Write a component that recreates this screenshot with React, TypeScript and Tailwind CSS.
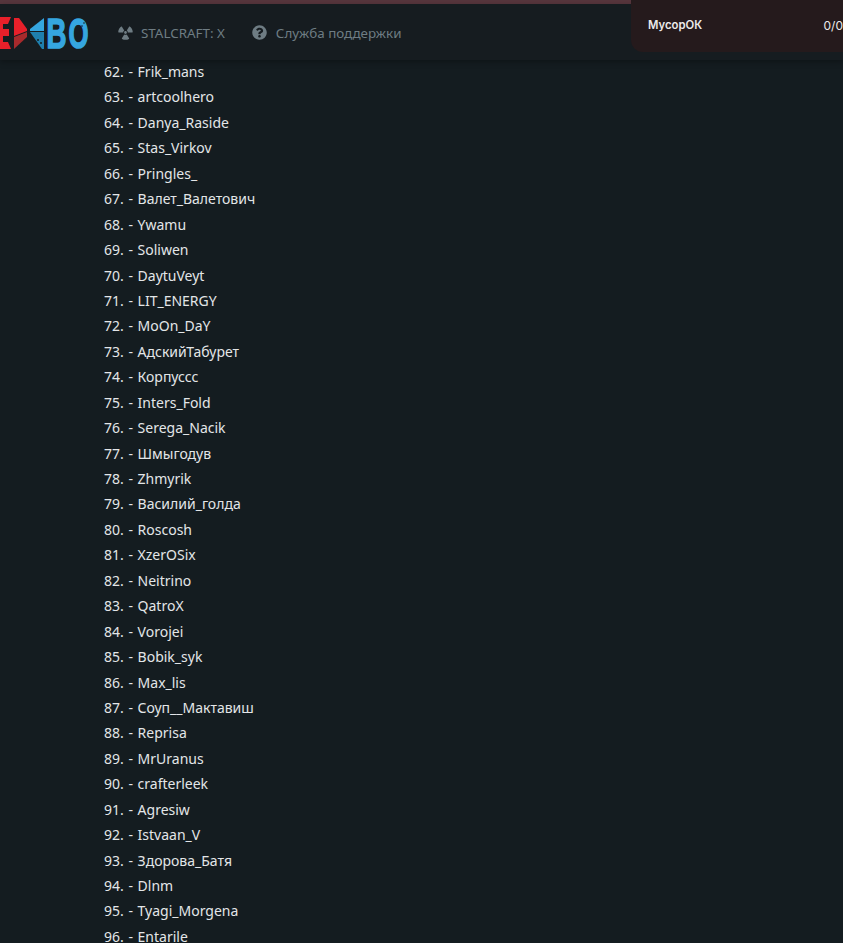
import React from "react";
import { FaRadiation, FaQuestionCircle } from "react-icons/fa";

const players = [
  "Frik_mans", "artcoolhero", "Danya_Raside", "Stas_Virkov", "Pringles_", "Валет_Валетович", "Ywamu",
  "Soliwen", "DaytuVeyt", "LIT_ENERGY", "MoOn_DaY", "АдскийТабурет", "Корпуссс", "Inters_Fold",
  "Serega_Nacik", "Шмыгодув", "Zhmyrik", "Василий_голда", "Roscosh", "XzerOSix", "Neitrino", "QatroX",
  "Vorojei", "Bobik_syk", "Max_lis", "Соуп__Мактавиш", "Reprisa", "MrUranus", "crafterleek", "Agresiw",
  "Istvaan_V", "Здорова_Батя", "Dlnm", "Tyagi_Morgena", "Entarile",
];

const Logo = () => (
  <svg width="90" height="32" viewBox="0 0 90 32" className="shrink-0">
    <path d="M-10 0H11L8 7H3V12H9V19H3V25H8L11 32H-10Z" fill="#e8202a" />
    <path d="M14 1H19L27 12V14L14 19Z" fill="#e8202a" />
    <path d="M14 20L27 15V20L14 32Z" fill="#a82a2c" />
    <path d="M44 1V14H30V12Z" fill="#35a6e0" />
    <path d="M30 15H44V32H42Z" fill="#1f7fae" />
    <circle cx="38" cy="23" r="1" fill="#161c20" />
    <circle cx="41" cy="26" r="1" fill="#161c20" />
    <text x="46.5" y="31" fontFamily="'Liberation Sans', sans-serif" fontWeight="700" fontSize="43" textLength="20" lengthAdjust="spacingAndGlyphs" fill="#35a6e0" stroke="#35a6e0" strokeWidth="1.6">B</text>
    <text x="68.5" y="31" fontFamily="'Liberation Sans', sans-serif" fontWeight="700" fontSize="43" textLength="20" lengthAdjust="spacingAndGlyphs" fill="#35a6e0" stroke="#35a6e0" strokeWidth="1.6">O</text>
    <circle cx="84" cy="6" r="0.8" fill="#161c20" />
    <circle cx="82" cy="9" r="0.8" fill="#161c20" />
  </svg>
);

export default function App() {
  return (
    <div className="relative h-[943px] overflow-hidden bg-[#141c20] font-['Noto_Sans',sans-serif]">
      <div className="h-1 bg-[#57363d]" />
      <header className="flex h-[56px] items-center bg-[#161c20] pt-[2px] shadow-[0_2px_6px_rgba(0,0,0,0.3)] text-[#6e7c83] text-[13.4px]">
        <Logo />
        <div className="ml-[28px] flex items-center gap-2">
          <FaRadiation className="h-[15px] w-[15px]" />
          <span>STALCRAFT: X</span>
        </div>
        <div className="ml-[27px] flex items-center gap-[9px]">
          <FaQuestionCircle className="h-[15px] w-[15px]" />
          <span>Служба поддержки</span>
        </div>
      </header>

      <ol className="pl-[104px] text-[14px] text-[#e3e6e8] [word-spacing:1px]">
        {players.map((name, i) => (
          <li key={name} className="h-[25.44px] leading-[25.44px] -translate-y-[1.5px]">
            {i + 62}. - {name}
          </li>
        ))}
      </ol>

      {/* notification */}
      <div className="absolute right-0 top-0 flex h-[52px] w-[212px] items-center justify-between rounded-bl-xl bg-[#251a1c] pl-[17px] font-['Inter',sans-serif] text-xs text-[#eceaea]">
        <span className="text-[11.3px] font-semibold">МусорОК</span>
        <span>0/0</span>
      </div>
    </div>
  );
}
